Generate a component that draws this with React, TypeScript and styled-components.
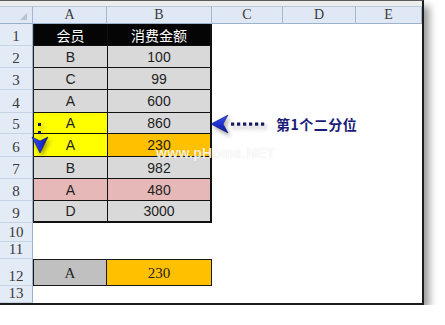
import styled, { createGlobalStyle } from 'styled-components';

const GlobalStyle = createGlobalStyle`
  html, body {
    margin: 0;
    padding: 0;
    background: #fff;
  }
  body {
    font-family: 'Liberation Sans', Arial, sans-serif;
  }
`;

const COLS = [33, 74, 105, 71, 73, 66];
const ROWS = [22, 22, 22, 23, 21, 23, 22, 22, 22, 19, 17, 27, 17];
const LETTERS = ['A', 'B', 'C', 'D', 'E'];

const SERIF = `'Liberation Serif', 'Noto Sans CJK SC', serif`;
const CJK = `'Liberation Sans', 'Noto Sans CJK SC', sans-serif`;

type Cell = { text: string; bg: string; color?: string };

const DATA: Cell[][] = [
  [{ text: '会员', bg: '#050505', color: '#fff' }, { text: '消费金额', bg: '#050505', color: '#fff' }],
  [{ text: 'B', bg: '#d9d9d9' }, { text: '100', bg: '#d9d9d9' }],
  [{ text: 'C', bg: '#d9d9d9' }, { text: '99', bg: '#d9d9d9' }],
  [{ text: 'A', bg: '#d9d9d9' }, { text: '600', bg: '#d9d9d9' }],
  [{ text: 'A', bg: '#ffff00' }, { text: '860', bg: '#d9d9d9' }],
  [{ text: 'A', bg: '#ffff00' }, { text: '230', bg: '#ffc000' }],
  [{ text: 'B', bg: '#d9d9d9' }, { text: '982', bg: '#d9d9d9' }],
  [{ text: 'A', bg: '#e6b8b7' }, { text: '480', bg: '#e6b8b7' }],
  [{ text: 'D', bg: '#d9d9d9' }, { text: '3000', bg: '#d9d9d9' }],
];

const Frame = styled.div`
  position: relative;
  width: ${COLS.reduce((a, b) => a + b, 0)}px;
  border-top: 1px solid #5a5a5a;
  border-right: 2px solid #1c1c1c;
  border-bottom: 2px solid #1c1c1c;
  background: #fff;
  box-shadow: 5px 6px 8px rgba(0, 0, 0, 0.42);
`;

const TopBand = styled.div`
  height: 5px;
  background: #ededed;
`;

const Sheet = styled.div`
  display: grid;
  grid-template-columns: ${COLS.map((c) => c + 'px').join(' ')};
  grid-template-rows: 18px ${ROWS.map((r) => r + 'px').join(' ')};
`;

const Corner = styled.div`
  position: relative;
  grid-row: 1;
  grid-column: 1;
  background: #dfe8f4;
  border-top: 1px solid #b9c8dc;
  border-right: 1px solid #a4b7d0;
  border-bottom: 1px solid #9cb1cb;
  &::after {
    content: '';
    position: absolute;
    right: 5px;
    bottom: 3px;
    border-left: 7px solid transparent;
    border-bottom: 7px solid #b8c2cf;
  }
`;

const ColHead = styled.div<{ $col: number }>`
  grid-row: 1;
  grid-column: ${(p) => p.$col};
  display: flex;
  align-items: center;
  justify-content: center;
  background: #dfe8f4;
  border-top: 1px solid #b9c8dc;
  border-right: 1px solid #a4b7d0;
  border-bottom: 1px solid #9cb1cb;
  font-family: ${SERIF};
  font-size: 14px;
  color: #3a3a3a;
`;

const RowHead = styled.div<{ $row: number }>`
  grid-row: ${(p) => p.$row};
  grid-column: 1;
  display: flex;
  align-items: flex-end;
  justify-content: center;
  padding-bottom: 1px;
  box-sizing: border-box;
  background: #e3ebf6;
  border-right: 1px solid #9cb1cb;
  border-bottom: 1px solid #c6d3e5;
  font-family: ${SERIF};
  font-size: 15px;
  line-height: 16px;
  color: #3a3a3a;
`;

const DataTable = styled.div`
  grid-column: 2 / 4;
  grid-row: 2 / 11;
  display: grid;
  grid-template-columns: 73px 1fr;
  grid-template-rows: 21px 21px 21px 22px 20px 22px 21px 21px 20px;
  gap: 1px;
  background: #111;
  border-left: 1px solid #222;
  border-right: 2px solid #111;
  border-bottom: 2px solid #111;
`;

const DataCell = styled.div<{ $bg: string; $color?: string }>`
  display: flex;
  align-items: center;
  justify-content: center;
  background: ${(p) => p.$bg};
  color: ${(p) => p.$color || '#222'};
  font-family: ${CJK};
  font-size: 14px;
`;

const ResultRow = styled.div`
  grid-column: 2 / 4;
  grid-row: 13;
  display: grid;
  grid-template-columns: 72px 1fr;
  gap: 1px;
  background: #1a1a1a;
  border: 1px solid #1a1a1a;
`;

const ResultCell = styled.div<{ $bg: string }>`
  display: flex;
  align-items: center;
  justify-content: center;
  padding-top: 2px;
  background: ${(p) => p.$bg};
  font-family: ${SERIF};
  font-size: 15px;
  color: #222;
`;

const Callout = styled.div`
  position: absolute;
  left: 208px;
  top: 109px;
  display: flex;
  align-items: center;
  gap: 6px;
`;

const ArrowSvg = styled.svg`
  display: block;
  filter: drop-shadow(2px 3px 2px rgba(0, 0, 0, 0.35));
`;

const CalloutText = styled.span`
  font-family: 'Noto Sans CJK SC', sans-serif;
  font-weight: 700;
  font-size: 14px;
  color: #1b1b78;
  letter-spacing: 0.5px;
`;

const DownArrow = styled.svg`
  position: absolute;
  left: 30px;
  top: 119px;
  filter: drop-shadow(2px 3px 2px rgba(0, 0, 0, 0.35));
`;

const Watermark = styled.span`
  position: absolute;
  left: 156px;
  top: 144px;
  font-family: 'Liberation Sans', Arial, sans-serif;
  font-weight: 700;
  font-size: 14px;
  color: rgba(255, 255, 255, 0.85);
  text-shadow: 0 0 1px rgba(0, 0, 0, 0.12);
  letter-spacing: 0.3px;
`;

function ArrowGradient({ id, vertical }: { id: string; vertical?: boolean }) {
  return (
    <defs>
      <linearGradient id={id} x1="0" y1="0" x2={vertical ? '1' : '0'} y2={vertical ? '0' : '1'}>
        <stop offset="0" stopColor="#3a55f0" />
        <stop offset="0.5" stopColor="#1f2fd6" />
        <stop offset="1" stopColor="#101a8a" />
      </linearGradient>
    </defs>
  );
}

export default function App() {
  return (
    <>
      <GlobalStyle />
      <Frame>
        <TopBand />
        <Sheet>
          <Corner />
          {LETTERS.map((l, i) => (
            <ColHead key={l} $col={i + 2}>
              {l}
            </ColHead>
          ))}
          {ROWS.map((_, i) => (
            <RowHead key={i} $row={i + 2}>
              {i + 1}
            </RowHead>
          ))}
          <DataTable>
            {DATA.flatMap((row, r) =>
              row.map((c, k) => (
                <DataCell key={`${r}-${k}`} $bg={c.bg} $color={c.color}>
                  {c.text}
                </DataCell>
              ))
            )}
          </DataTable>
          <ResultRow>
            <ResultCell $bg="#c0c0c0">A</ResultCell>
            <ResultCell $bg="#ffc000">230</ResultCell>
          </ResultRow>
        </Sheet>

        <Watermark>www.pHome.NET</Watermark>

        <DownArrow width="20" height="36" viewBox="0 0 20 36">
          <ArrowGradient id="gdown" vertical />
          <rect x="8" y="3" width="3" height="3" fill="#15155a" />
          <rect x="8" y="11" width="3" height="3" fill="#15155a" />
          <path d="M2 17 L10 21 L18 17 L10 33 Z" fill="url(#gdown)" stroke="#0d1470" strokeWidth="0.6" />
        </DownArrow>

        <Callout>
          <ArrowSvg width="62" height="28" viewBox="0 0 62 28">
            <ArrowGradient id="gleft" />
            <path d="M3 14 L20 5 L15 14 L20 23 Z" fill="url(#gleft)" stroke="#0d1470" strokeWidth="0.6" />
            {[23, 29, 35, 41, 47, 53].map((x) => (
              <rect key={x} x={x} y="12.5" width="3.2" height="3.2" fill="#17175e" />
            ))}
          </ArrowSvg>
          <CalloutText>第1个二分位</CalloutText>
        </Callout>
      </Frame>
    </>
  );
}
